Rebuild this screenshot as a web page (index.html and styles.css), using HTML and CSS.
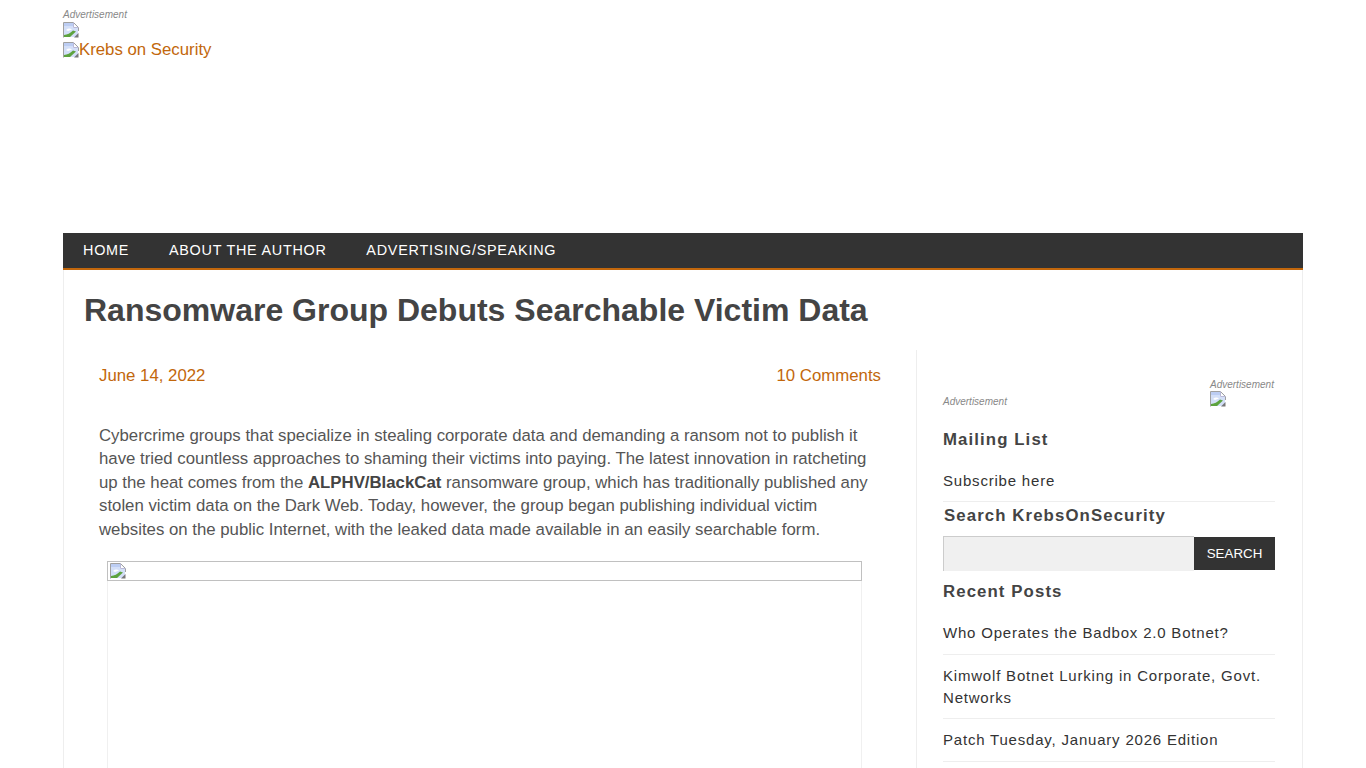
FILE: index.html
```html
<!DOCTYPE html>
<html lang="en">
<head>
    <meta charset="UTF-8">
    <meta name="viewport" content="width=device-width, initial-scale=1.0">
    <title>Ransomware Group Debuts Searchable Victim Data - Krebs on Security</title>
    <link rel="stylesheet" href="styles.css">
</head>
<body>
    <svg class="defs" width="0" height="0" aria-hidden="true">
        <symbol id="broken" viewBox="0 0 16 16">
            <path d="M1 1H10L15 6V15H1Z" fill="#d3dff8"/>
            <path d="M1 1H10V4H1Z" fill="#bccdf3"/>
            <path d="M10 1V6H15Z" fill="#fff"/>
            <path d="M0.5 15.5V0.5H10.5L15.5 5.5V9" fill="none" stroke="#a0a0a0"/>
            <path d="M10.5 0.5V5.5H15.5" fill="none" stroke="#b9b9d8"/>
            <path d="M3 8Q6 5.5 9 7.5L5 9Z" fill="#fff"/>
            <path d="M1 15V13Q6 12.5 10 8.5L13 9.5L7 15Z" fill="#5da33e"/>
            <path d="M11 15.5L15.5 11V15.5Z" fill="#777"/>
        </symbol>
    </svg>
    <div class="page">
        <header class="site-header">
            <p class="ad-label">Advertisement</p>
            <svg class="broken-img"><use href="#broken"/></svg>
            <a class="logo" href="#"><svg class="broken-img"><use href="#broken"/></svg>Krebs on Security</a>
        </header>
        <nav class="navbar">
            <a href="#">Home</a>
            <a href="#">About the Author</a>
            <a href="#">Advertising/Speaking</a>
        </nav>
        <div class="content">
            <h1 class="post-title">Ransomware Group Debuts Searchable Victim Data</h1>
            <div class="columns">
                <main class="post">
                    <div class="post-meta">
                        <a href="#">June 14, 2022</a>
                        <a href="#">10 Comments</a>
                    </div>
                    <p class="post-text">Cybercrime groups that specialize in stealing corporate data and demanding a ransom not to publish it have tried countless approaches to shaming their victims into paying. The latest innovation in ratcheting up the heat comes from the <strong>ALPHV/BlackCat</strong> ransomware group, which has traditionally published any stolen victim data on the Dark Web. Today, however, the group began publishing individual victim websites on the public Internet, with the leaked data made available in an easily searchable form.</p>
                    <div class="figure">
                        <div class="figure-broken"><svg class="broken-img"><use href="#broken"/></svg></div>
                    </div>
                </main>
                <aside class="sidebar">
                    <div class="side-ads">
                        <p class="ad-label side-ad-left">Advertisement</p>
                        <div class="side-ad-right">
                            <p class="ad-label">Advertisement</p>
                            <svg class="broken-img"><use href="#broken"/></svg>
                        </div>
                    </div>
                    <h3 class="widget-title mailing-title">Mailing List</h3>
                    <ul class="widget-list subscribe-list">
                        <li><a href="#">Subscribe here</a></li>
                    </ul>
                    <h3 class="widget-title search-title">Search KrebsOnSecurity</h3>
                    <form class="search-form">
                        <input class="search-input" type="text">
                        <button class="search-btn" type="button">SEARCH</button>
                    </form>
                    <h3 class="widget-title recent-title">Recent Posts</h3>
                    <ul class="widget-list recent-list">
                        <li><a href="#">Who Operates the Badbox 2.0 Botnet?</a></li>
                        <li><a href="#">Kimwolf Botnet Lurking in Corporate, Govt. Networks</a></li>
                        <li><a href="#">Patch Tuesday, January 2026 Edition</a></li>
                    </ul>
                </aside>
            </div>
        </div>
    </div>
</body>
</html>
```

FILE: styles.css
```css
* {
    margin: 0;
    padding: 0;
    box-sizing: border-box;
}

html, body {
    height: 100%;
    overflow: hidden;
}

body {
    background: #fff;
    color: #444;
    font-family: 'Liberation Sans', Arial, sans-serif;
}

a {
    color: #c2670c;
    text-decoration: none;
}

.defs {
    position: absolute;
}

.page {
    display: flex;
    flex-direction: column;
    width: 1240px;
    height: 100%;
    margin: 0 auto;
}

.broken-img {
    display: block;
    width: 16px;
    height: 16px;
}

.ad-label {
    font-size: 10px;
    font-style: italic;
    line-height: 12px;
    color: #888;
}

.site-header {
    height: 233px;
    padding-top: 9px;
    flex: none;
}

.site-header > .broken-img {
    margin-top: 1px;
}

.logo {
    display: flex;
    align-items: center;
    margin-top: 3px;
    font-size: 16.8px;
    line-height: 18px;
}

.navbar {
    display: flex;
    flex: none;
    height: 37px;
    padding-left: 20px;
    gap: 39.7px;
    background: #333;
    border-bottom: 2px solid #c2670c;
}

.navbar a {
    color: #fff;
    font-size: 14.4px;
    line-height: 34px;
    letter-spacing: 0.75px;
    text-transform: uppercase;
}

.content {
    flex: 1;
    min-height: 0;
    overflow: hidden;
    border-left: 1px solid #eee;
    border-right: 1px solid #eee;
}

.post-title {
    padding: 21px 0 0 20px;
    height: 80px;
    font-size: 32px;
    line-height: 38px;
    font-weight: 700;
    color: #444;
}

.columns {
    display: flex;
    height: 420px;
}

.post {
    width: 852px;
    padding: 14px 35px 0;
    flex: none;
}

.post-meta {
    display: flex;
    justify-content: space-between;
    font-size: 16.8px;
    line-height: 24px;
}

.post-text {
    margin-top: 35.8px;
    font-size: 16.8px;
    line-height: 23.5px;
    color: #555;
}

.post-text strong {
    color: #444;
}

.figure {
    margin: 20.2px 0 0 8px;
    width: 755px;
    height: 300px;
    border: 1px solid #f0f0f0;
    border-top: none;
}

.figure-broken {
    height: 20px;
    margin: 0 -1px;
    padding: 1px 2px;
    border: 1px solid #c0c0c0;
    overflow: hidden;
}

.sidebar {
    flex: 1;
    padding: 27px 27px 0 26px;
    border-left: 1px solid #eee;
}

.side-ads {
    display: flex;
    justify-content: space-between;
    align-items: flex-end;
    height: 30px;
}

.side-ad-left {
    margin-bottom: -1px;
}

.side-ad-right {
    width: 65px;
}

.widget-title {
    font-size: 16.8px;
    line-height: 20px;
    font-weight: 700;
    letter-spacing: 1.1px;
    color: #444;
}

.mailing-title {
    margin-top: 23px;
}

.search-title {
    margin: 4px 0 0 1px;
}

.recent-title {
    margin-top: 11px;
}

.widget-list {
    list-style: none;
    margin-top: 10px;
}

.widget-list li {
    padding: 10px 0;
    border-bottom: 1px solid #eee;
    font-size: 15px;
    line-height: 21.6px;
    letter-spacing: 0.8px;
}

.subscribe-list li {
    padding-bottom: 9px;
}

.recent-list li:first-child {
    padding-bottom: 11px;
}

.widget-list a {
    color: #333;
}

.search-form {
    display: flex;
    margin-top: 10px;
}

.search-input {
    width: 251px;
    height: 35px;
    background: #f0f0f0;
    border: none;
    border-top: 1px solid #ccc;
    border-left: 1px solid #ccc;
}

.search-btn {
    flex: 1;
    height: 33px;
    margin-top: 1px;
    background: #333;
    border: none;
    color: #fff;
    font-family: 'Liberation Sans', Arial, sans-serif;
    font-size: 13.33px;
}
```
